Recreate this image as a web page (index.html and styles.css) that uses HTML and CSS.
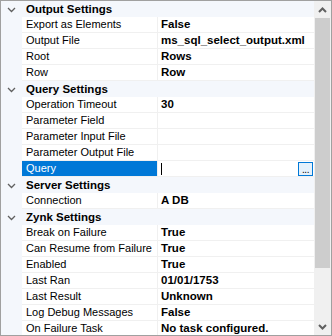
FILE: index.html
```html
<!DOCTYPE html>
<html>
<head>
<meta charset="utf-8">
<link rel="stylesheet" href="styles.css">
</head>
<body>
<div class="grid">
  <div class="rows">
    <div class="cat"><svg class="chev" width="9" height="6" viewBox="0 0 9 6"><polyline points="1,1 4.5,4.5 8,1" fill="none" stroke="#606060" stroke-width="1.3"/></svg>Output Settings</div>
    <div class="row"><div class="label">Export as Elements</div><div class="value">False</div></div>
    <div class="row"><div class="label">Output File</div><div class="value">ms_sql_select_output.xml</div></div>
    <div class="row"><div class="label">Root</div><div class="value">Rows</div></div>
    <div class="row"><div class="label">Row</div><div class="value">Row</div></div>
    <div class="cat"><svg class="chev" width="9" height="6" viewBox="0 0 9 6"><polyline points="1,1 4.5,4.5 8,1" fill="none" stroke="#606060" stroke-width="1.3"/></svg>Query Settings</div>
    <div class="row"><div class="label">Operation Timeout</div><div class="value">30</div></div>
    <div class="row"><div class="label">Parameter Field</div><div class="value"></div></div>
    <div class="row"><div class="label">Parameter Input File</div><div class="value"></div></div>
    <div class="row"><div class="label">Parameter Output File</div><div class="value"></div></div>
    <div class="row"><div class="label selected">Query</div><div class="value edit"><span class="caret"></span><span class="dots">...</span></div></div>
    <div class="cat"><svg class="chev" width="9" height="6" viewBox="0 0 9 6"><polyline points="1,1 4.5,4.5 8,1" fill="none" stroke="#606060" stroke-width="1.3"/></svg>Server Settings</div>
    <div class="row"><div class="label">Connection</div><div class="value">A DB</div></div>
    <div class="cat"><svg class="chev" width="9" height="6" viewBox="0 0 9 6"><polyline points="1,1 4.5,4.5 8,1" fill="none" stroke="#606060" stroke-width="1.3"/></svg>Zynk Settings</div>
    <div class="row"><div class="label">Break on Failure</div><div class="value">True</div></div>
    <div class="row"><div class="label">Can Resume from Failure</div><div class="value">True</div></div>
    <div class="row"><div class="label">Enabled</div><div class="value">True</div></div>
    <div class="row"><div class="label">Last Ran</div><div class="value">01/01/1753</div></div>
    <div class="row"><div class="label">Last Result</div><div class="value">Unknown</div></div>
    <div class="row"><div class="label">Log Debug Messages</div><div class="value">False</div></div>
    <div class="row"><div class="label">On Failure Task</div><div class="value">No task configured.</div></div>
  </div>
  <div class="scrollbar">
    <div class="sbtn"><svg width="9" height="6" viewBox="0 0 9 6"><polyline points="1,5 4.5,1.5 8,5" fill="none" stroke="#606060" stroke-width="2"/></svg></div>
    <div class="track"><div class="thumb"></div></div>
    <div class="sbtn"><svg width="9" height="6" viewBox="0 0 9 6"><polyline points="1,1 4.5,4.5 8,1" fill="none" stroke="#606060" stroke-width="2"/></svg></div>
  </div>
</div>
</body>
</html>
```
FILE: styles.css
```css
html, body {
  margin: 0;
  padding: 0;
  background: #ffffff;
}
.grid {
  width: 332px;
  height: 336px;
  box-sizing: border-box;
  border: 1px solid #a0a0a0;
  display: flex;
  overflow: hidden;
  font-family: "Liberation Sans", Arial, sans-serif;
  font-size: 11px;
  color: #000;
}
.rows {
  flex: 1;
  background: #f4f7fc;
  overflow: hidden;
}
.cat {
  height: 16px;
  line-height: 16px;
  font-weight: bold;
  font-size: 11.5px;
  padding-left: 25px;
  position: relative;
  white-space: nowrap;
}
.chev {
  position: absolute;
  left: 6px;
  top: 6px;
}
.row {
  display: flex;
  margin-left: 21px;
  height: 16px;
}
.label {
  width: 131px;
  padding-left: 4px;
  height: 15px;
  line-height: 15px;
  background: #fff;
  border-bottom: 1px solid #f0f0f0;
  border-right: 1px solid #f0f0f0;
  white-space: nowrap;
  overflow: hidden;
}
.label.selected {
  background: #0078d7;
  color: #fff;
}
.value {
  flex: 1;
  padding-left: 3px;
  height: 15px;
  line-height: 15px;
  background: #fff;
  border-bottom: 1px solid #f0f0f0;
  font-weight: bold;
  font-size: 11.5px;
  white-space: nowrap;
  overflow: hidden;
  position: relative;
}
.caret {
  position: absolute;
  left: 3px;
  top: 2px;
  width: 1px;
  height: 12px;
  background: #000;
}
.dots {
  position: absolute;
  right: 1px;
  top: 1px;
  width: 13px;
  height: 12px;
  border: 1px solid #0078d7;
  background: #e5f1fb;
  font-weight: normal;
  font-size: 10px;
  line-height: 14px;
  text-align: center;
  letter-spacing: -0.5px;
}
.scrollbar {
  width: 17px;
  background: #f0f0f0;
  display: flex;
  flex-direction: column;
}
.sbtn {
  height: 17px;
  display: flex;
  align-items: center;
  justify-content: center;
}
.track {
  flex: 1;
}
.thumb {
  margin: 0 1px;
  height: 250px;
  background: #cdcdcd;
}
```
